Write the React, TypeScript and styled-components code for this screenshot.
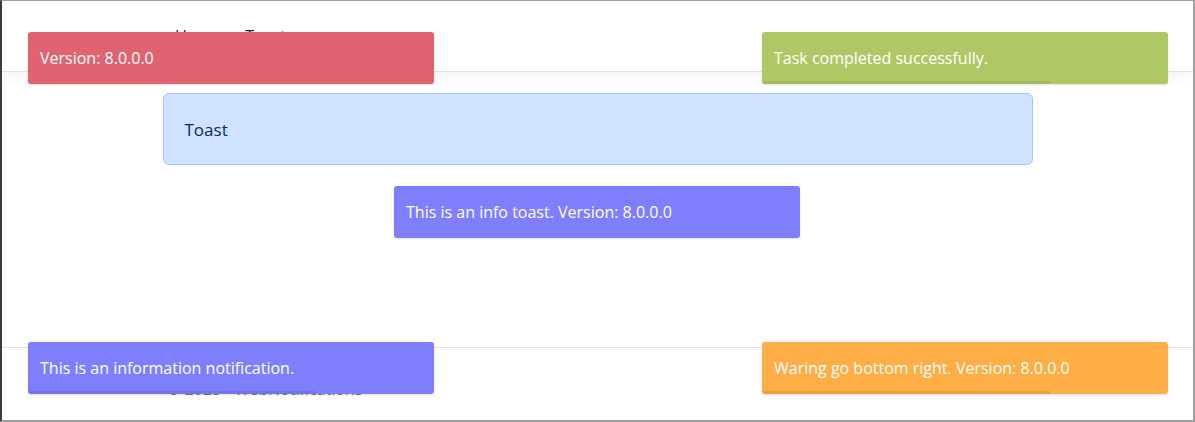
import React from "react";
import styled, { createGlobalStyle } from "styled-components";

type Tone = "danger" | "success" | "info" | "warning";

const toneColors: Record<Tone, string> = {
	danger: "#e0636f",
	success: "#b0c766",
	info: "#7f7ffe",
	warning: "#feae44",
};

const toasts: {
	id: string;
	tone: Tone;
	text: string;
	place: "topLeft" | "topRight" | "center" | "bottomLeft" | "bottomRight";
	progress?: number;
}[] = [
	{ id: "t1", tone: "danger", text: "Version: 8.0.0.0", place: "topLeft" },
	{
		id: "t2",
		tone: "success",
		text: "Task completed successfully.",
		place: "topRight",
		progress: 71,
	},
	{
		id: "t3",
		tone: "info",
		text: "This is an info toast. Version: 8.0.0.0",
		place: "center",
	},
	{
		id: "t4",
		tone: "info",
		text: "This is an information notification.",
		place: "bottomLeft",
		progress: 71,
	},
	{
		id: "t5",
		tone: "warning",
		text: "Waring go bottom right. Version: 8.0.0.0",
		place: "bottomRight",
		progress: 71,
	},
];

export default function App() {
	return (
		<>
			<GlobalStyle />
			<Frame>
				<Navbar>
					<NavInner>
						<NavLink>Home</NavLink>
						<NavLink>Toast</NavLink>
					</NavInner>
				</Navbar>
				<Main>
					<Alert>Toast</Alert>
				</Main>
				<Footer>
					<FooterInner>© 2025 - WebNotifications</FooterInner>
				</Footer>

				{toasts.map((t) => (
					<ToastBox key={t.id} tone={t.tone} place={t.place}>
						{t.text}
						{t.progress !== undefined && (
							<Progress style={{ width: `${t.progress}%` }} />
						)}
					</ToastBox>
				))}
			</Frame>
		</>
	);
}

const GlobalStyle = createGlobalStyle`
	html, body {
		margin: 0;
		padding: 0;
		background: #fff;
	}
	* {
		box-sizing: border-box;
	}
`;

const Frame = styled.div`
	position: relative;
	width: 1195px;
	height: 422px;
	overflow: hidden;
	display: flex;
	flex-direction: column;
	border-top: 1px solid #a0a0a0;
	border-left: 2px solid #3c3c3c;
	border-right: 2px solid #a0a0a0;
	border-bottom: 2px solid #a0a0a0;
	font-family: "Open Sans", "Noto Sans", sans-serif;
	font-size: 16px;
	color: #212529;
`;

const Navbar = styled.header`
	height: 71px;
	flex-shrink: 0;
	border-bottom: 1px solid #dee2e6;
	box-shadow: 0 4px 14px rgba(0, 0, 0, 0.05);
	display: flex;
	align-items: center;
`;

const NavInner = styled.nav`
	margin-left: 173px;
	display: flex;
	gap: 25px;
	font-size: 16px;
	color: rgba(0, 0, 0, 0.9);
`;

const NavLink = styled.span`
	padding: 0;
`;

const Main = styled.main`
	flex: 1;
	padding-top: 21px;
	display: flex;
	justify-content: center;
`;

const Alert = styled.div`
	width: 870px;
	height: 72px;
	padding: 0 21px;
	display: flex;
	align-items: center;
	background: #cfe2ff;
	border: 1px solid #9ec5fe;
	border-radius: 6px;
	color: #052c65;
	font-size: 17px;
	align-self: flex-start;
`;

const Footer = styled.footer`
	height: 73px;
	flex-shrink: 0;
	border-top: 1px solid #dee2e6;
	display: flex;
	align-items: flex-end;
`;

const FooterInner = styled.div`
	margin-left: 165px;
	padding-bottom: 20px;
	color: #6c757d;
	font-size: 16px;
`;

const placeStyles = {
	topLeft: "top: 31px; left: 26px;",
	topRight: "top: 31px; left: 760px;",
	center: "top: 185px; left: 392px;",
	bottomLeft: "top: 341px; left: 26px;",
	bottomRight: "top: 341px; left: 760px;",
};

const ToastBox = styled.div<{ tone: Tone; place: keyof typeof placeStyles }>`
	position: absolute;
	${(p) => placeStyles[p.place]}
	width: 406px;
	height: 52px;
	padding: 0 12px;
	display: flex;
	align-items: center;
	background: ${(p) => toneColors[p.tone]};
	color: #fff;
	font-size: 16px;
	border-radius: 3px;
	box-shadow: 0 1px 2px rgba(0, 0, 0, 0.12);
	overflow: hidden;
	z-index: 10;
`;

const Progress = styled.div`
	position: absolute;
	left: 0;
	bottom: 0;
	height: 3px;
	background: rgba(0, 0, 0, 0.08);
`;
